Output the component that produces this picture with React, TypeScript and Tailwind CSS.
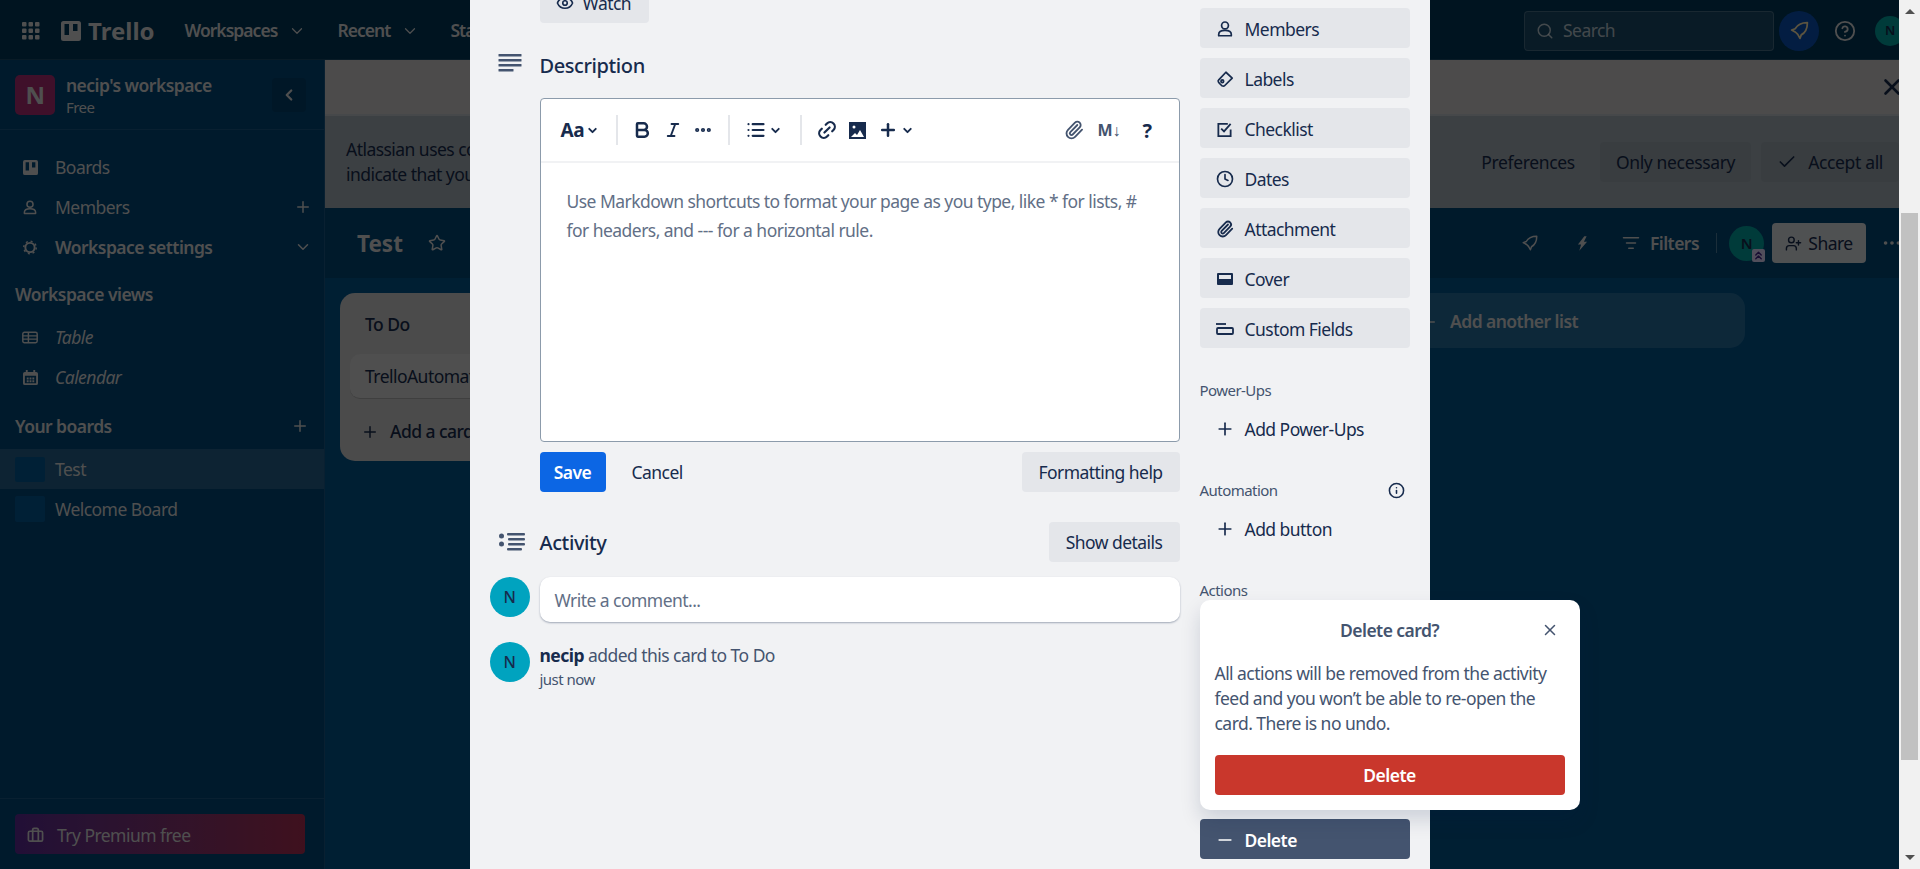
import React from "react";
import { Search, HelpCircle, X, Check, Plus, ChevronDown, ChevronLeft, ChevronsUp, Star, ListFilter, UserPlus, Briefcase, MoreHorizontal, Info, Minus, Clock, Paperclip, Eye, Bold, Italic, List, Link2 } from "lucide-react";

const Logo = ({ className }: { className?: string }) => (
  <svg viewBox="0 0 20 20" className={className} fill="currentColor">
    <path fillRule="evenodd" d="M2.5 0h15A2.5 2.5 0 0 1 20 2.5v15a2.5 2.5 0 0 1-2.5 2.5h-15A2.5 2.5 0 0 1 0 17.500v-15A2.5 2.5 0 0 1 2.500 0ZM3.500 3v11h4.500V3H3.500Zm8.500 0v7h4.500V3H12Z" />
  </svg>
);

const Apps = () => (
  <svg viewBox="0 0 18 18" className="w-[18px] h-[18px]" fill="currentColor">
    {[0, 6.5, 13].flatMap((x) => [0, 6.5, 13].map((y) => <rect key={`${x}-${y}`} x={x} y={y} width="4.500" height="4.500" rx="1" />))}
  </svg>
);

const Person = ({ className }: { className?: string }) => (
  <svg viewBox="0 0 20 20" className={className} fill="none" stroke="currentColor" strokeWidth="1.900">
    <circle cx="10" cy="6" r="3.800" />
    <path d="M3 17.500v-1.500c0-2.800 3-4.500 7-4.500s7 1.700 7 4.500v1.500z" strokeLinejoin="round" />
  </svg>
);

const RocketIcon = ({ className }: { className?: string }) => (
  <svg viewBox="0 0 24 24" className={className} fill="none" stroke="currentColor" strokeWidth="2" strokeLinejoin="round">
    <path d="M21 3c-6.500 0-11.500 2.500-14 7l-4 1.500 4.500 2.500 2.500 2.500 2.500 4.500 1.500-4c4.500-2.500 7-7.500 7-14z" />
  </svg>
);

const Gear = ({ className }: { className?: string }) => (
  <svg viewBox="0 0 20 20" className={className} fill="none" stroke="currentColor">
    <circle cx="10" cy="10" r="5.800" strokeWidth="2.400" />
    <circle cx="10" cy="10" r="7.800" strokeWidth="1.800" strokeDasharray="2.500 3.600" />
  </svg>
);

const CalIcon = ({ className }: { className?: string }) => (
  <svg viewBox="0 0 16 16" className={className} fill="currentColor">
    <path fillRule="evenodd" d="M3 0h2v2h6V0h2v2h1a2 2 0 0 1 2 2v10a2 2 0 0 1-2 2H2a2 2 0 0 1-2-2V4a2 2 0 0 1 2-2h1V0ZM2 6v8h12V6H2Z" />
    <path d="M4 8h2v2H4zM7 8h2v2H7zM10 8h2v2h-2zM4 11h2v2H4zM7 11h2v2H7zM10 11h2v2h-2z" />
  </svg>
);

const TableIcon = ({ className }: { className?: string }) => (
  <svg viewBox="0 0 20 15" className={className} fill="none" stroke="currentColor" strokeWidth="1.800">
    <rect x="1" y="1" width="18" height="13" rx="2" />
    <path d="M1 5.500h18M1 9.500h18M8 1v13" />
  </svg>
);

const Nav = ({ label }: { label: string }) => (
  <div className="flex items-center gap-[11px] font-semibold tracking-[-0.055em]">
    <span>{label}</span>
    <ChevronDown className="w-[18px] h-[18px]" strokeWidth={1.6} />
  </div>
);

const SideRow = ({ icon, label, right, className = "" }: { icon: React.ReactNode; label: string; right?: React.ReactNode; className?: string }) => (
  <div className={`h-10 flex items-center pl-[22px] pr-[12px] ${className}`}>
    <span className="w-[16px] flex justify-center mr-[17px]">{icon}</span>
    <span className="flex-1">{label}</span>
    {right}
  </div>
);

const SideBtn = ({ icon, label }: { icon: React.ReactNode; label: string }) => (
  <div className="h-10 w-[210px] mb-[10px] rounded-[4px] bg-[#e4e6ea] flex items-center pl-[15px] pt-[2px] text-[#172b4d]">
    <span className="w-5 flex justify-center mr-[10px] text-[#172b4d]">{icon}</span>
    {label}
  </div>
);

const Avatar = ({ className = "" }: { className?: string }) => (
  <div className={`w-10 h-10 rounded-full bg-[#00a3bf] flex items-center justify-center text-[#172b4d] text-[16px] font-medium ${className}`}>N</div>
);

const Chev = () => <ChevronDown className="w-[13px] h-[13px]" strokeWidth={3.5} />;
const Sep = ({ className = "" }: { className?: string }) => <span className={`w-[2px] h-[30px] bg-[#e4e6ea] ${className}`} />;

export default function App() {
  return (
    <div className="relative w-[1920px] h-[869px] overflow-hidden text-[17.5px] leading-[25px] tracking-[-0.031em] bg-[#00578f]" style={{ fontFamily: '"Noto Sans", sans-serif' }}>
      {/* page under the overlay */}
      <div className="h-full flex flex-col text-[#dcdcdc]">
        <header className="h-[60px] shrink-0 bg-[#00385a] flex items-center pl-[22px] pr-[15px] pt-[2px] border-b border-white/10">
          <Apps />
          <Logo className="w-[20px] h-[20px] ml-[21px]" />
          <span className="ml-[7px] text-[24px] font-bold tracking-normal mr-[30px]">Trello</span>
          <div className="flex gap-[31px]">
            <Nav label="Workspaces" />
            <Nav label="Recent" />
            <Nav label="Starred" />
          </div>
          <div className="ml-auto w-[250px] h-10 rounded-[4px] border border-white/20 bg-white/10 flex items-center pl-[11px] gap-[9px] text-white/70">
            <Search className="w-[18px] h-[18px]" />
            Search
          </div>
          <div className="ml-[5px] w-10 h-10 rounded-full bg-[#0a52b8] flex items-center justify-center text-[#ffe8b0]">
            <RocketIcon className="w-[21px] h-[21px]" />
          </div>
          <HelpCircle className="ml-[15px] w-[22px] h-[22px]" />
          <div className="ml-[19px] w-[30px] h-[30px] rounded-full bg-[#00a3a0] text-[#172b4d] text-[13px] font-semibold flex items-center justify-center">N</div>
        </header>
        <div className="flex-1 flex min-h-0">
          <aside className="w-[325px] shrink-0 bg-[#00487a] border-r border-white/10 flex flex-col">
            <div className="h-[70px] border-b border-white/10 flex items-center pl-[15px]">
              <div className="w-10 h-10 rounded-[5px] bg-[#ae2e74] flex items-center justify-center text-[24px] font-bold">N</div>
              <div className="ml-[11px]">
                <div className="font-semibold leading-[24px]">necip's workspace</div>
                <div className="text-[15px] leading-[20px]">Free</div>
              </div>
              <span className="ml-auto mr-[18px] w-[34px] h-[34px] rounded-[4px] bg-black/10 flex items-center justify-center">
                <ChevronLeft className="w-[18px] h-[18px]" strokeWidth={3} />
              </span>
            </div>
            <div className="pt-[17px]">
              <SideRow icon={<Logo className="w-[15px] h-[15px]" />} label="Boards" />
              <SideRow icon={<Person className="w-[17px] h-[17px]" />} label="Members" right={<Plus className="w-[18px] h-[18px]" />} />
              <SideRow icon={<Gear className="w-[17px] h-[17px]" />} label="Workspace settings" className="font-semibold" right={<ChevronDown className="w-[18px] h-[18px]" />} />
            </div>
            <div className="pl-[15px] mt-[11px] mb-[6px] h-[33px] flex items-center font-semibold">Workspace views</div>
            <SideRow icon={<TableIcon className="w-[20px] h-[15px]" />} label="Table" className="italic" />
            <SideRow icon={<CalIcon className="w-[15px] h-[15px]" />} label="Calendar" className="italic" />
            <div className="mt-[11px] h-[36px] pl-[15px] pr-[15px] flex items-center justify-between font-semibold">
              <span>Your boards</span>
              <Plus className="w-[18px] h-[18px] font-normal" />
            </div>
            <div className="h-10 bg-white/15 flex items-center pl-[15px] mt-[5px]">
              <span className="w-[30px] h-[25px] rounded-[2px] bg-[#005a96] mr-[10px]" />
              Test
            </div>
            <div className="h-10 flex items-center pl-[15px]">
              <span className="w-[30px] h-[26px] rounded-[2px] bg-[#005a96] mr-[10px]" />
              Welcome Board
            </div>
            <div className="mt-auto h-[71px] border-t border-white/10 pl-[15px] pt-[15px]">
              <div className="w-[290px] h-10 rounded-[4px] bg-gradient-to-r from-[#5e2b97] to-[#ae2e54] flex items-center pl-[12px] gap-[13px] pt-[2px]">
                <Briefcase className="w-[17px] h-[17px]" strokeWidth={2.4} />
                <span>Try Premium free</span>
              </div>
            </div>
          </aside>
          <main className="flex-1 min-w-0 flex flex-col">
            <div className="h-[56px] shrink-0 bg-[#d2cfcf] border-b-2 border-[#c2c7cc] flex items-center justify-end pr-[15px] text-[#172b4d]">
              <X className="w-[26px] h-[26px]" strokeWidth={2.4} />
            </div>
            <div className="h-[92px] shrink-0 bg-[#a7b2ba] flex items-center pl-[21px] text-[#172b4d]">
              <p className="leading-[25px] whitespace-nowrap">Atlassian uses cookies to improve your browsing experience, perform analytics and research, and conduct advertising.<br />indicate that you accept these cookies.</p>
              <div className="ml-auto flex items-center pr-[21px] tracking-[-0.02em]">
                <span className="mr-[25px]">Preferences</span>
                <span className="h-10 px-[16px] flex items-center rounded-[4px] bg-[#9ea9b1] mr-[10px]">Only necessary</span>
                <span className="h-10 pl-[16px] pr-[16px] flex items-center rounded-[4px] bg-[#9ea9b1] gap-[11px]"><Check className="w-[20px] h-[20px]" />Accept all</span>
              </div>
            </div>
            <div className="h-[70px] shrink-0 bg-[#004878] flex items-center pl-[32px] pr-[17px]">
              <span className="text-[22.500px] font-bold tracking-normal">Test</span>
              <Star className="ml-[25px] w-[18px] h-[18px]" />
              <div className="ml-auto flex items-center">
                <RocketIcon className="w-[18px] h-[18px]" />
                <svg viewBox="0 0 12 16" className="ml-[38px] w-[11px] h-[15px]" fill="currentColor"><path d="M8 0 1 9h3.500L2.500 16 11 6H7.500L10.500 0z" /></svg>
                <ListFilter className="ml-[34px] w-[18px] h-[18px]" />
                <span className="ml-[10px] font-semibold">Filters</span>
                <span className="ml-[17px] w-px h-[20px] bg-white/30" />
                <div className="relative ml-[12px]">
                  <div className="w-[35px] h-[35px] rounded-full bg-[#00a3a0] text-[#172b4d] text-[15px] font-semibold flex items-center justify-center">N</div>
                  <span className="absolute -right-px -bottom-px w-[13px] h-[13px] rounded-[2px] bg-[#dfd8fd] flex items-center justify-center text-[#44268a]">
                    <ChevronsUp className="w-[13px] h-[13px]" strokeWidth={2.6} />
                  </span>
                </div>
                <span className="ml-[8px] w-[94px] h-10 rounded-[4px] bg-[#dcdfe4] text-[#172b4d] flex items-center justify-center gap-[6px]">
                  <UserPlus className="w-[17px] h-[17px]" />Share
                </span>
                <MoreHorizontal className="ml-[15px] w-[22px] h-[22px]" />
              </div>
            </div>
            <div className="flex-1 bg-[#00578f] flex items-start gap-[15px] pl-[15px] pt-[15px]">
              <div className="w-[340px] h-[168px] shrink-0 rounded-[15px] bg-[#cfcfcf] text-[#172b4d] px-[10px] pt-[16px]">
                <div className="pl-[15px] font-medium leading-[30px]">To Do</div>
                <div className="mt-[15px] h-[45px] rounded-[10px] bg-[#dadada] border-b border-black/20 flex items-center pl-[15px]">TrelloAutomation</div>
                <div className="mt-[20px] pl-[11px] flex items-center gap-[11px] font-medium"><Plus className="w-[18px] h-[18px]" />Add a card</div>
              </div>
              <div className="w-[340px] shrink-0" />
              <div className="w-[340px] shrink-0" />
              <div className="w-[340px] h-[55px] shrink-0 rounded-[15px] bg-white/15 flex items-center pl-[15px] pt-[2px] gap-[12px] font-semibold">
                <Plus className="w-[18px] h-[18px]" />Add another list
              </div>
            </div>
          </main>
        </div>
      </div>

      {/* overlay with the card dialog */}
      <div className="absolute inset-0 bg-black/[0.64] flex">
        <div className="flex-1 min-w-0 flex justify-center overflow-hidden">
          <div className="w-[960px] h-[869px] shrink-0 bg-[#f1f2f4] flex text-[#172b4d]">
            <div className="w-[730px] shrink-0 pr-[20px]">
              <div className="ml-[70px] -mt-[17px] w-[109px] h-10 rounded-[4px] bg-[#e4e6ea] flex items-center pl-[16px] gap-[9px]">
                <Eye className="w-[18px] h-[18px]" strokeWidth={2.2} />Watch
              </div>
              <div className="mt-[22px] h-[40px] flex items-center">
                <svg viewBox="0 0 24 18" className="ml-[28px] w-[24px] h-[18px] -mt-[4px]" fill="#44546f">
                  <rect x="0.500" y="0" width="23" height="2.600" rx="0.500" />
                  <rect x="0.500" y="5" width="23" height="2.600" rx="0.500" />
                  <rect x="0.500" y="10" width="23" height="2.600" rx="0.500" />
                  <rect x="0.500" y="15" width="15" height="2.600" rx="0.500" />
                </svg>
                <span className="ml-[18px] text-[20px] font-medium tracking-[-0.02em]">Description</span>
              </div>
              <div className="ml-[70px] mt-[13px] h-[344px] rounded-[4px] border border-[#8c9bab] bg-white flex flex-col">
                <div className="h-[64px] shrink-0 border-b-2 border-[#f1f2f4] flex items-center text-[#172b4d]">
                  <span className="ml-[20px] text-[19px] font-bold tracking-[-0.02em]">Aa</span>
                  <span className="ml-[2px]"><Chev /></span>
                  <Sep className="ml-[17px]" />
                  <Bold className="ml-[14px] w-[20px] h-[20px]" strokeWidth={3} />
                  <Italic className="ml-[12px] w-[18px] h-[18px]" strokeWidth={2.5} />
                  <MoreHorizontal className="ml-[11px] w-[20px] h-[20px]" strokeWidth={3} />
                  <Sep className="ml-[15px]" />
                  <List className="ml-[16px] w-[20px] h-[20px]" strokeWidth={2.6} />
                  <span className="ml-[3px]"><Chev /></span>
                  <Sep className="ml-[18px]" />
                  <Link2 className="ml-[14px] w-[22px] h-[22px] -rotate-45" strokeWidth={2.4} />
                  <svg viewBox="0 0 17 17" className="ml-[11px] w-[17px] h-[17px]">
                    <path fill="#172b4d" d="M0 0h17v17H0z" />
                    <circle cx="5" cy="5" r="1.500" fill="#fff" />
                    <path fill="#fff" d="M2 15l4-4 2 2 3-5 4 7z" />
                  </svg>
                  <Plus className="ml-[12px] w-[20px] h-[20px]" strokeWidth={3} />
                  <span className="ml-[3px]"><Chev /></span>
                  <span className="ml-auto flex items-center">
                    <Paperclip className="w-[20px] h-[20px] text-[#44546f]" strokeWidth={2.2} />
                    <span className="ml-[13px] text-[16px] font-bold text-[#44546f] tracking-normal">M↓</span>
                    <span className="ml-[22px] mr-[27px] text-[20px] font-bold">?</span>
                  </span>
                </div>
                <div className="px-[26px] pt-[24px] text-[#626f86] leading-[29px]">
                  Use Markdown shortcuts to format your page as you type, like * for lists, #<br />for headers, and --- for a horizontal rule.
                </div>
              </div>
              <div className="ml-[70px] mt-[10px] flex items-center">
                <span className="h-10 w-[66px] rounded-[4px] bg-[#0c66e4] text-white font-semibold flex items-center justify-center">Save</span>
                <span className="ml-[26px]">Cancel</span>
                <span className="ml-auto h-10 w-[158px] rounded-[4px] bg-[#e4e6ea] flex items-center justify-center">Formatting help</span>
              </div>
              <div className="mt-[30px] flex items-center">
                <svg viewBox="0 0 26 18" className="ml-[29px] w-[26px] h-[18px]" fill="#44546f">
                  <circle cx="2.500" cy="3" r="2.500" />
                  <circle cx="2.500" cy="11" r="2.500" />
                  <rect x="8" y="0" width="18" height="2.600" rx="1" />
                  <rect x="9" y="5" width="17" height="2.600" rx="1" />
                  <rect x="9" y="10" width="17" height="2.600" rx="1" />
                  <rect x="8" y="15" width="15" height="2.600" rx="1" />
                </svg>
                <span className="ml-[15px] text-[20px] font-medium tracking-[-0.02em]">Activity</span>
                <span className="ml-auto h-10 w-[131px] rounded-[4px] bg-[#e4e6ea] flex items-center justify-center">Show details</span>
              </div>
              <div className="mt-[15px] flex items-start">
                <Avatar className="ml-[20px]" />
                <div className="ml-[10px] flex-1 h-[45px] rounded-[10px] bg-white shadow-[0_1px_2px_rgba(9,30,66,0.35)] flex items-center pl-[15px] pt-[2px] text-[#626f86]">Write a comment...</div>
              </div>
              <div className="mt-[20px] flex items-start">
                <Avatar className="ml-[20px]" />
                <div className="ml-[10px] mt-[1px]">
                  <div><span className="font-bold">necip</span> <span className="text-[#44546f]">added this card to To Do</span></div>
                  <div className="text-[15px] leading-[22px] text-[#44546f]">just now</div>
                </div>
              </div>
            </div>
            <div className="relative flex-1 pt-[8px]">
              <SideBtn icon={<Person className="w-[18px] h-[18px]" />} label="Members" />
              <SideBtn icon={
                <svg viewBox="0 0 20 20" className="w-[18px] h-[18px]" fill="none" stroke="#172b4d" strokeWidth="1.900" strokeLinejoin="round">
                  <path d="M11 2.500 18 9l-8.500 8.500c-.7.7-1.800.5-3 0L4 15C2.500 13.500 2 12 2.800 11.200z" />
                  <circle cx="7" cy="12.500" r="1.500" />
                </svg>
              } label="Labels" />
              <SideBtn icon={
                <svg viewBox="0 0 18 18" className="w-[17px] h-[17px]" fill="none" stroke="#172b4d" strokeWidth="1.900">
                  <path d="M15.500 9v7h-13V3h10" />
                  <path d="m5.500 8 3 3 7-8" />
                </svg>
              } label="Checklist" />
              <SideBtn icon={<Clock className="w-[18px] h-[18px]" strokeWidth={2.2} />} label="Dates" />
              <SideBtn icon={<Paperclip className="w-[18px] h-[18px]" strokeWidth={2.4} />} label="Attachment" />
              <SideBtn icon={
                <svg viewBox="0 0 16 12" className="w-[16px] h-[12px]"><path fill="#172b4d" d="M1 0h14a1 1 0 0 1 1 1v10a1 1 0 0 1-1 1H1a1 1 0 0 1-1-1V1a1 1 0 0 1 1-1Zm1 2v4h12V2H2Z" /></svg>
              } label="Cover" />
              <SideBtn icon={
                <svg viewBox="0 0 18 12" className="w-[18px] h-[12px]" fill="none" stroke="#172b4d" strokeWidth="1.800"><path d="M0 1h10" /><rect x="1" y="5" width="16" height="6" rx="1" /></svg>
              } label="Custom Fields" />
              <div className="mt-[32px] text-[15px] leading-[20px] text-[#44546f]">Power-Ups</div>
              <div className="h-10 mt-[9px] flex items-center pl-[15px]"><Plus className="w-5 h-5 mr-[10px]" />Add Power-Ups</div>
              <div className="mt-[31px] w-[210px] pr-[5px] text-[15px] leading-[20px] text-[#44546f] flex items-center justify-between">Automation<Info className="w-[17px] h-[17px] text-[#172b4d]" strokeWidth={2.2} /></div>
              <div className="h-10 mt-[9px] flex items-center pl-[15px]"><Plus className="w-5 h-5 mr-[10px]" />Add button</div>
              <div className="mt-[31px] text-[15px] leading-[20px] text-[#44546f]">Actions</div>
              <div className="absolute left-0 top-[819px] h-10 w-[210px] rounded-[4px] bg-[#44546f] flex items-center pl-[15px] pt-[2px] text-white font-semibold">
                <Minus className="w-5 h-5 mr-[10px]" />Delete
              </div>
              <div className="absolute left-0 top-[600px] w-[380px] h-[210px] rounded-[10px] bg-white shadow-[0_10px_20px_rgba(9,30,66,0.15)] px-[15px]">
                <div className="h-[60px] relative flex items-center justify-center font-semibold text-[#44546f] pt-[1px]">
                  Delete card?
                  <X className="absolute right-[6px] top-[21px] w-[18px] h-[18px]" />
                </div>
                <p className="text-[#44546f] leading-[25px] pt-[1px]">All actions will be removed from the activity feed and you won’t be able to re-open the card. There is no undo.</p>
                <div className="mt-[19px] h-10 rounded-[4px] bg-[#c9372c] text-white font-semibold flex items-center justify-center">Delete</div>
              </div>
            </div>
          </div>
        </div>
        <div className="w-[21px] shrink-0 bg-[#f1f1f1] relative">
          <span className="absolute left-[6px] top-[9px] w-0 h-0 border-x-[5px] border-x-transparent border-b-[5px] border-b-[#505050]" />
          <div className="mx-[2px] mt-[213px] h-[547px] bg-[#c1c1c1]" />
          <span className="absolute left-[6px] bottom-[9px] w-0 h-0 border-x-[5px] border-x-transparent border-t-[5px] border-t-[#505050]" />
        </div>
      </div>
    </div>
  );
}
